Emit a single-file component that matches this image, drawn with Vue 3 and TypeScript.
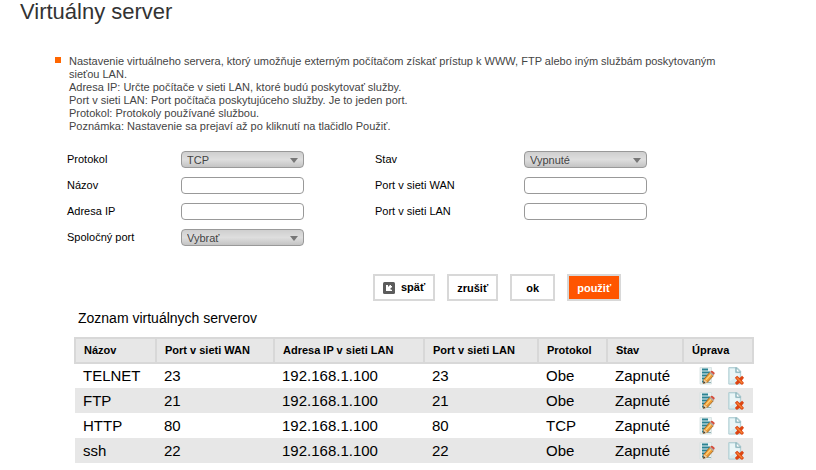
<script setup lang="ts">
import { reactive, ref } from 'vue'

interface ServerEntry {
  name: string
  wanPort: string
  lanIp: string
  lanPort: string
  protocol: string
  state: string
}

const notes: string[] = [
  'Nastavenie virtuálneho servera, ktorý umožňuje externým počítačom získať prístup k WWW, FTP alebo iným službám poskytovaným sieťou LAN.',
  'Adresa IP: Určte počítače v sieti LAN, ktoré budú poskytovať služby.',
  'Port v sieti LAN: Port počítača poskytujúceho služby. Je to jeden port.',
  'Protokol: Protokoly používané službou.',
  'Poznámka: Nastavenie sa prejaví až po kliknutí na tlačidlo Použiť.',
]

const columns: string[] = [
  'Názov',
  'Port v sieti WAN',
  'Adresa IP v sieti LAN',
  'Port v sieti LAN',
  'Protokol',
  'Stav',
  'Úprava',
]

const blank = {
  protocol: 'TCP',
  name: '',
  ip: '',
  common: 'Vybrať',
  state: 'Vypnuté',
  wan: '',
  lan: '',
}
const form = reactive({ ...blank })

const servers = ref<ServerEntry[]>([
  { name: 'TELNET', wanPort: '23', lanIp: '192.168.1.100', lanPort: '23', protocol: 'Obe', state: 'Zapnuté' },
  { name: 'FTP', wanPort: '21', lanIp: '192.168.1.100', lanPort: '21', protocol: 'Obe', state: 'Zapnuté' },
  { name: 'HTTP', wanPort: '80', lanIp: '192.168.1.100', lanPort: '80', protocol: 'TCP', state: 'Zapnuté' },
  { name: 'ssh', wanPort: '22', lanIp: '192.168.1.100', lanPort: '22', protocol: 'Obe', state: 'Zapnuté' },
])

function reset(): void {
  Object.assign(form, blank)
}

function edit(entry: ServerEntry): void {
  form.name = entry.name
  form.ip = entry.lanIp
  form.wan = entry.wanPort
  form.lan = entry.lanPort
  form.protocol = entry.protocol
  form.state = entry.state
}

function remove(index: number): void {
  servers.value.splice(index, 1)
}
</script>

<template>
  <main class="page">
    <h1 class="title">Virtuálny server</h1>

    <section class="intro">
      <span class="bullet"></span>
      <div class="notes">
        <p v-for="note in notes" :key="note">{{ note }}</p>
      </div>
    </section>

    <form class="settings" @submit.prevent>
      <div class="fields">
        <label for="protocol">Protokol</label>
        <span class="pick">
          <select id="protocol" v-model="form.protocol">
            <option>TCP</option>
            <option>UDP</option>
            <option>Obe</option>
          </select>
        </span>
        <label for="state">Stav</label>
        <span class="pick">
          <select id="state" v-model="form.state">
            <option>Vypnuté</option>
            <option>Zapnuté</option>
          </select>
        </span>

        <label for="name">Názov</label>
        <input id="name" v-model="form.name" type="text" />
        <label for="wan">Port v sieti WAN</label>
        <input id="wan" v-model="form.wan" type="text" />

        <label for="ip">Adresa IP</label>
        <input id="ip" v-model="form.ip" type="text" />
        <label for="lan">Port v sieti LAN</label>
        <input id="lan" v-model="form.lan" type="text" />

        <label for="common">Spoločný port</label>
        <span class="pick">
          <select id="common" v-model="form.common">
            <option>Vybrať</option>
            <option>FTP</option>
            <option>HTTP</option>
            <option>TELNET</option>
          </select>
        </span>
      </div>

      <div class="actions">
        <button type="button" class="btn with-icon">
          <svg class="back" viewBox="0 0 12 12" aria-hidden="true">
            <rect width="12" height="12" rx="1.5" fill="#5c5c5c" />
            <path d="M3 3h2v2l2-2h1v1h1v1L7 7l2 1v1H3Z" fill="#fff" />
          </svg>
          späť
        </button>
        <button type="button" class="btn" @click="reset">zrušiť</button>
        <button type="button" class="btn">ok</button>
        <button type="submit" class="btn primary">použiť</button>
      </div>
    </form>

    <section class="list">
      <h2 class="subtitle">Zoznam virtuálnych serverov</h2>
      <table class="servers">
        <colgroup>
          <col class="c-name" />
          <col class="c-wan" />
          <col class="c-ip" />
          <col class="c-lan" />
          <col class="c-proto" />
          <col class="c-state" />
          <col class="c-edit" />
        </colgroup>
        <thead>
          <tr>
            <th v-for="column in columns" :key="column" scope="col">{{ column }}</th>
          </tr>
        </thead>
        <tbody>
          <tr v-for="(entry, index) in servers" :key="entry.name">
            <td>{{ entry.name }}</td>
            <td>{{ entry.wanPort }}</td>
            <td>{{ entry.lanIp }}</td>
            <td>{{ entry.lanPort }}</td>
            <td>{{ entry.protocol }}</td>
            <td>{{ entry.state }}</td>
            <td>
              <div class="tools">
                <button type="button" class="tool" aria-label="Upraviť" @click="edit(entry)">
                  <svg viewBox="0 0 16 18" aria-hidden="true">
                    <path d="M1 .5h11.500v16.500H1z" fill="#e9f1f1" stroke="#d3dfdf" stroke-width=".8" />
                    <path d="M3 2.500h6M3 5.500h8M3 8.500h6M3 11.500h4M3 14.500h2.500" stroke="#2a8393" stroke-width="1.800" />
                    <path d="M8 15.500h4" stroke="#8fb0b5" stroke-width="1" />
                    <path d="M4.200 16.400 5 12.200 10.500 5.600 14.300 8.800 8.500 15.200Z" fill="#ed9c34" stroke="#9b5f1c" stroke-width=".8" />
                    <path d="M6.900 12.900 12.200 7" stroke="#ffd279" stroke-width="1.400" />
                    <path d="m4.200 16.400.8-4.200 3.500 3Z" fill="#ecd0a4" />
                    <path d="m4.200 16.400.4-2.300 1.800 1.600Z" fill="#333" />
                    <path d="m10.300 5.900 1.200-1.400 3.600 3.100-1.200 1.400Z" fill="#b5aca4" />
                    <path d="m11.400 4.700.7-.8q.7-.5 1.400.100l1.900 1.600q.6.600.100 1.300l-.7.800Z" fill="#d64f3d" />
                  </svg>
                </button>
                <button type="button" class="tool" aria-label="Odstrániť" @click="remove(index)">
                  <svg viewBox="0 0 16 18" aria-hidden="true">
                    <path d="M.8.6h8.400l3.500 3.600v12.900H.8z" fill="#d8ecef" stroke="#a9c8ce" stroke-width=".9" />
                    <path d="M2 2h5.500v3.800H11.500v3L2 14z" fill="#eaf6f7" />
                    <path d="M7.700.6v5h5" fill="none" stroke="#8fb9c1" stroke-width=".8" />
                    <path d="M8.300.8v4.200h4.100Z" fill="#fff" stroke="#76a5ae" stroke-width=".7" />
                    <path d="m6.900 10.800 2.200-2 2.500 2.300 2.500-2.300 1.900 2-2.100 2.600 2.100 2.700-2 1.800-2.500-1.900-2.600 1.900-2-1.800 2.300-2.700Z" fill="#dc4513" />
                    <path d="m8.600 10.600 5.800 5.700" stroke="#f68537" stroke-width="1.400" />
                  </svg>
                </button>
              </div>
            </td>
          </tr>
        </tbody>
      </table>
    </section>
  </main>
</template>

<style>
body {
  margin: 0;
  background: #fff;
}
</style>

<style scoped>
.page {
  box-sizing: border-box;
  padding: 0 62px 7px 20px;
  font-family: "Liberation Sans", Arial, sans-serif;
  font-size: 11px;
  line-height: 13px;
  color: #000;
}

.title {
  margin: 0;
  font-size: 22px;
  font-weight: 400;
  line-height: 24px;
  color: #333;
}

.intro {
  display: flex;
  gap: 8px;
  margin: 31px 0 0 35px;
  padding-right: 22px;
  color: #444;
}

.bullet {
  flex: none;
  width: 6px;
  height: 6px;
  margin-top: 2px;
  background: #ff6600;
}

.notes p {
  margin: 0;
}

.settings {
  margin: 18px 0 0 47px;
}

.fields {
  display: grid;
  grid-template-columns: 114px 194px 149px 1fr;
  grid-auto-rows: 17px;
  row-gap: 9px;
  align-items: center;
}

.fields input,
.fields select,
.pick {
  box-sizing: border-box;
  width: 123px;
  height: 17px;
}

.fields input,
.fields select {
  display: block;
  margin: 0;
  border: 1px solid #999;
  border-radius: 4px;
  font: inherit;
}

.fields input {
  padding: 0 5px;
  background: #fff;
}

.fields select {
  appearance: none;
  padding: 1px 16px 0 5px;
  background: linear-gradient(#cfcfcf, #dedede 50%, #c4c4c4);
  color: #444;
}

.pick {
  position: relative;
}

.pick::after {
  content: "";
  position: absolute;
  top: 7px;
  right: 6px;
  border: 4px solid transparent;
  border-top: 5px solid #777;
  border-bottom: 0;
  pointer-events: none;
}

.actions {
  display: flex;
  gap: 12px;
  margin: 28px 0 0 306px;
}

.btn {
  display: flex;
  align-items: center;
  justify-content: center;
  gap: 6px;
  box-sizing: border-box;
  min-width: 45px;
  height: 27px;
  padding: 2px 8px 0;
  border: 2px solid #d8d8d8;
  background: #fff;
  color: #000;
  font: bold 11px/13px "Liberation Sans", Arial, sans-serif;
}

.btn.with-icon {
  padding-top: 0;
}

.btn.primary {
  background: #ff5500;
  color: #fff;
}

.back {
  width: 12px;
  height: 12px;
}

.list {
  margin: 8px 0 0 54px;
}

.subtitle {
  margin: 0 0 10px 4px;
  font-size: 14px;
  font-weight: 400;
  line-height: 18px;
}

.servers {
  width: 100%;
  table-layout: fixed;
  border-collapse: collapse;
}

.c-name { width: 81px; }
.c-wan { width: 118px; }
.c-lan { width: 114px; }
.c-proto { width: 69px; }
.c-state { width: 76px; }
.c-edit { width: 70px; }

.servers th {
  height: 23px;
  padding: 0 8px;
  border: 2px solid #d8d8d8;
  background: #e7e7e7;
  font-size: 11px;
  font-weight: 700;
  line-height: 13px;
  text-align: left;
}

.servers td {
  height: 25px;
  padding: 0 8px;
  font-size: 15px;
  line-height: 18px;
}

.servers tbody tr:first-child td {
  height: 24px;
}

.servers tbody tr:nth-child(even) {
  background: #e7e7e7;
}

.tools {
  display: flex;
  gap: 13px;
  padding-left: 8px;
}

.tool {
  flex: none;
  width: 16px;
  height: 18px;
  padding: 0;
  border: 0;
  background: none;
}

.tool svg {
  display: block;
  width: 16px;
  height: 18px;
}
</style>
